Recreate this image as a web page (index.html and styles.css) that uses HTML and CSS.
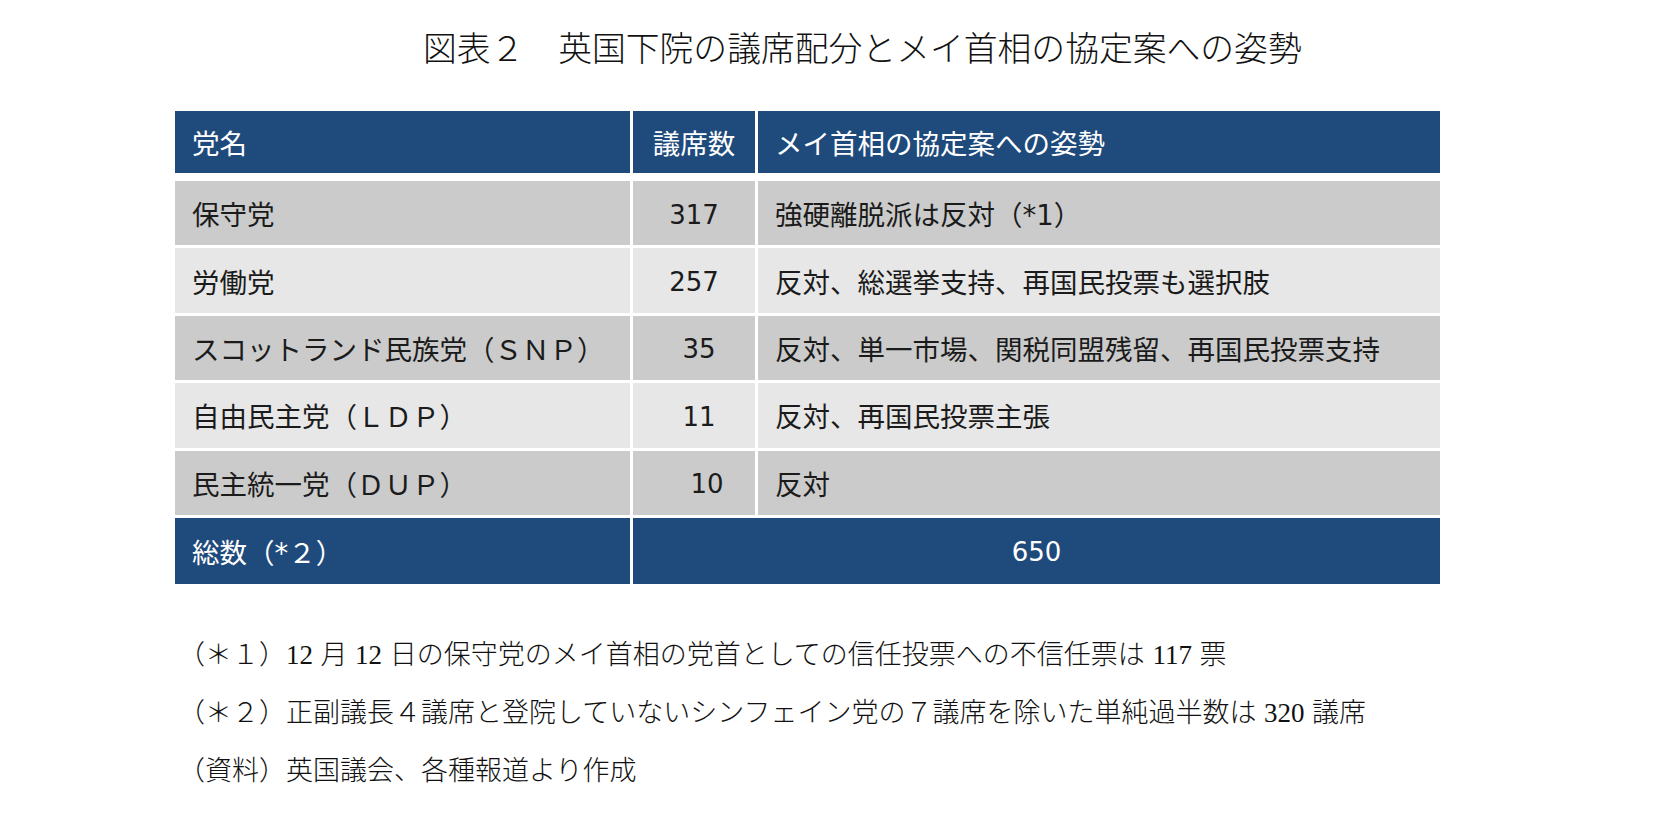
FILE: index.html
```html
<!DOCTYPE html>
<html lang="ja">
<head>
<meta charset="utf-8">
<title>図表２</title>
<link rel="stylesheet" href="styles.css">
</head>
<body>
<div class="page">
  <h1 class="title">図表２　英国下院の議席配分とメイ首相の協定案への姿勢</h1>
  <div class="table">
    <div class="row head">
      <div class="cell">党名</div>
      <div class="cell num">議席数</div>
      <div class="cell">メイ首相の協定案への姿勢</div>
    </div>
    <div class="body">
      <div class="row dark">
        <div class="cell">保守党</div>
        <div class="cell num">317</div>
        <div class="cell">強硬離脱派は反対（*1）</div>
      </div>
      <div class="row light">
        <div class="cell">労働党</div>
        <div class="cell num">257</div>
        <div class="cell">反対、総選挙支持、再国民投票も選択肢</div>
      </div>
      <div class="row dark">
        <div class="cell">スコットランド民族党（ＳＮＰ）</div>
        <div class="cell num shift-s">35</div>
        <div class="cell">反対、単一市場、関税同盟残留、再国民投票支持</div>
      </div>
      <div class="row light">
        <div class="cell">自由民主党（ＬＤＰ）</div>
        <div class="cell num shift-s">11</div>
        <div class="cell">反対、再国民投票主張</div>
      </div>
      <div class="row dark">
        <div class="cell">民主統一党（ＤＵＰ）</div>
        <div class="cell num shift-l">10</div>
        <div class="cell">反対</div>
      </div>
      <div class="row total">
        <div class="cell">総数（*２）</div>
        <div class="cell num span2">650</div>
      </div>
    </div>
  </div>
  <div class="notes">
    <p class="note">（＊１）12 月 12 日の保守党のメイ首相の党首としての信任投票への不信任票は 117 票</p>
    <p class="note">（＊２）正副議長４議席と登院していないシンフェイン党の７議席を除いた単純過半数は 320 議席</p>
    <p class="note">（資料）英国議会、各種報道より作成</p>
  </div>
</div>
</body>
</html>
```
FILE: styles.css
```css
html, body {
  margin: 0;
  padding: 0;
  background: #ffffff;
}

.page {
  padding: 33px 0 0 175px;
  width: 1265px;
}

.title {
  margin: 0 0 44px 248px;
  font-family: "Liberation Serif", "Noto Sans CJK JP", serif;
  font-weight: 300;
  font-size: 33.8px;
  line-height: 34px;
  color: #111111;
  white-space: nowrap;
}

.table {
  display: flex;
  flex-direction: column;
  width: 1265px;
}

.row {
  display: grid;
  grid-template-columns: 455px 122px 682px;
  column-gap: 3px;
  height: 64.4px;
}

.head {
  height: 62px;
  margin-bottom: 8px;
}

.body {
  display: flex;
  flex-direction: column;
  gap: 3px;
}

.cell {
  display: flex;
  align-items: center;
  padding-left: 17px;
  font-family: "DejaVu Sans", "Noto Sans CJK JP", sans-serif;
  font-size: 27.5px;
  color: #1b1b1b;
  white-space: nowrap;
}

.num {
  justify-content: center;
  padding-left: 0;
  font-size: 26px;
}

.body .num {
  padding-top: 3px;
}

.head .num {
  font-size: 27.5px;
}

.body .shift-s {
  padding-left: 10px;
}

.body .shift-l {
  padding-left: 26px;
}

.span2 {
  grid-column: span 2;
}

.head .cell,
.total .cell {
  background: #1f4a7c;
  color: #ffffff;
}

.dark .cell {
  background: #cbcbcb;
}

.light .cell {
  background: #e7e7e7;
}

.total {
  height: 66px;
}

.notes {
  margin-top: 42px;
  padding-left: 3px;
}

.note {
  margin: 0;
  font-family: "Liberation Serif", "Noto Sans CJK JP", serif;
  font-weight: 300;
  font-size: 27px;
  line-height: 58px;
  color: #111111;
  word-spacing: 0.03em;
  white-space: nowrap;
}
```
